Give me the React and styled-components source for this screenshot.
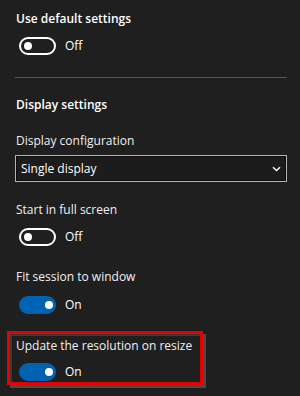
import React from 'react';
import styled, { createGlobalStyle } from 'styled-components';

const GlobalStyle = createGlobalStyle`
  html, body {
    margin: 0;
    padding: 0;
    background: #1f1f1f;
  }
  body {
    font-family: 'Open Sans', 'Noto Sans', sans-serif;
    color: #ffffff;
  }
`;

const Panel = styled.div`
  width: 300px;
  height: 396px;
  box-sizing: border-box;
  padding: 11px 13px 0 15px;
  background: #1f1f1f;
  overflow: hidden;
`;

const Heading = styled.div`
  font-size: 12px;
  font-weight: 600;
  line-height: 16px;
  height: 16px;
  margin-top: ${({ $top }) => $top || 0}px;
  padding-left: 1px;
  white-space: nowrap;
`;

const Label = styled.div`
  font-size: 12px;
  line-height: 16px;
  height: 16px;
  margin-top: ${({ $top }) => $top || 0}px;
  padding-left: 1px;
  color: #f0f0f0;
  white-space: nowrap;
`;

const ToggleRow = styled.div`
  display: flex;
  align-items: center;
  gap: 9px;
  height: 18px;
  margin-top: ${({ $top }) => $top}px;
  padding-left: 4px;
`;

const Track = styled.div`
  position: relative;
  width: 37px;
  height: 18px;
  box-sizing: border-box;
  border-radius: 9px;
  border: 2px solid ${({ $on }) => ($on ? '#0063b1' : '#ffffff')};
  background: ${({ $on }) => ($on ? '#0063b1' : 'transparent')};
`;

const Knob = styled.span`
  position: absolute;
  top: 3px;
  left: ${({ $on }) => ($on ? '24px' : '3px')};
  width: 8px;
  height: 8px;
  border-radius: 50%;
  background: #ffffff;
`;

const State = styled.span`
  font-size: 12px;
  line-height: 16px;
  color: #ffffff;
`;

const Divider = styled.hr`
  border: 0;
  height: 1px;
  background: #555555;
  margin: 22px 0 0 0;
`;

const Select = styled.div`
  display: flex;
  align-items: center;
  justify-content: space-between;
  height: 27px;
  box-sizing: border-box;
  margin-top: 6px;
  padding: 0 5px 0 5px;
  border: 1px solid #b4b4b4;
  box-shadow: inset 0 0 0 1px #0d0d0d;
  background: #1c1c1c;
  font-size: 12px;
  line-height: 16px;
  color: #ffffff;
`;

const Highlight = styled.div`
  margin: 17px 0 0 -8px;
  width: 196px;
  box-sizing: border-box;
  border: 3px solid #e60000;
  padding: 4px 0 1px 5px;
  box-shadow: 3px 3px 0 #4a4a4a, inset 2px 2px 0 #3a3a3a;
`;

function Toggle({ on, top }) {
  return (
    <ToggleRow $top={top}>
      <Track $on={on}>
        <Knob $on={on} />
      </Track>
      <State>{on ? 'On' : 'Off'}</State>
    </ToggleRow>
  );
}

function Chevron() {
  return (
    <svg width="9" height="6" viewBox="0 0 9 6">
      <path d="M1 1.2 L4.5 4.6 L8 1.2" fill="none" stroke="#ffffff" strokeWidth="1.4" />
    </svg>
  );
}

export default function App() {
  return (
    <>
      <GlobalStyle />
      <Panel>
        <Heading>Use default settings</Heading>
        <Toggle on={false} top={10} />
        <Divider />
        <Heading $top={19}>Display settings</Heading>
        <Label $top={20}>Display configuration</Label>
        <Select>
          <span>Single display</span>
          <Chevron />
        </Select>
        <Label $top={20}>Start in full screen</Label>
        <Toggle on={false} top={10} />
        <Label $top={23}>Fit session to window</Label>
        <Toggle on top={11} />
        <Highlight>
          <Label>Update the resolution on resize</Label>
          <Toggle on top={9} />
        </Highlight>
      </Panel>
    </>
  );
}
